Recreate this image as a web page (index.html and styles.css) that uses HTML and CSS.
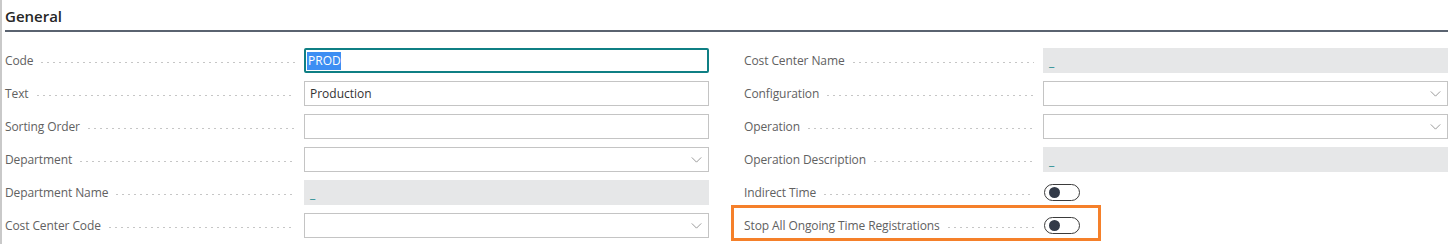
FILE: index.html
```html
<!DOCTYPE html>
<html>
<head>
<meta charset="utf-8">
<link rel="stylesheet" href="styles.css">
</head>
<body>
<div class="page">
  <div class="section">
    <h2 class="section-title">General</h2>
    <div class="grid">
      <div class="col">
        <div class="row"><span class="label">Code</span><span class="lead"></span><div class="field focus"><span class="sel">PROD</span></div></div>
        <div class="row"><span class="label">Text</span><span class="lead"></span><div class="field">Production</div></div>
        <div class="row"><span class="label">Sorting Order</span><span class="lead"></span><div class="field"></div></div>
        <div class="row"><span class="label">Department</span><span class="lead"></span><div class="field select"><svg class="chev" viewBox="0 0 12 7"><path d="M0.5 0.5 L6 6 L11.5 0.5" /></svg></div></div>
        <div class="row"><span class="label">Department Name</span><span class="lead"></span><div class="field ro"><span class="us">_</span></div></div>
        <div class="row"><span class="label">Cost Center Code</span><span class="lead"></span><div class="field select"><svg class="chev" viewBox="0 0 12 7"><path d="M0.5 0.5 L6 6 L11.5 0.5" /></svg></div></div>
      </div>
      <div class="col">
        <div class="row"><span class="label">Cost Center Name</span><span class="lead"></span><div class="field ro"><span class="us">_</span></div></div>
        <div class="row"><span class="label">Configuration</span><span class="lead"></span><div class="field select"><svg class="chev" viewBox="0 0 12 7"><path d="M0.5 0.5 L6 6 L11.5 0.5" /></svg></div></div>
        <div class="row"><span class="label">Operation</span><span class="lead"></span><div class="field select"><svg class="chev" viewBox="0 0 12 7"><path d="M0.5 0.5 L6 6 L11.5 0.5" /></svg></div></div>
        <div class="row"><span class="label">Operation Description</span><span class="lead"></span><div class="field ro"><span class="us">_</span></div></div>
        <div class="row"><span class="label">Indirect Time</span><span class="lead"></span><div class="field plain"><span class="toggle"><span class="knob"></span></span></div></div>
        <div class="row hl"><span class="label">Stop All Ongoing Time Registrations</span><span class="lead"></span><div class="field plain"><span class="toggle"><span class="knob"></span></span></div><span class="highlight"></span></div>
      </div>
    </div>
  </div>
</div>
</body>
</html>
```
FILE: styles.css
```css
html, body {
  margin: 0;
  padding: 0;
  background: #ffffff;
}
body {
  font-family: "Open Sans", "Noto Sans", "Liberation Sans", sans-serif;
  color: #212121;
}
.page {
  border-left: 2px solid #c9c9c9;
  height: 244px;
  box-sizing: border-box;
  padding: 0 6px 0 3px;
}
.section-title {
  margin: 0;
  padding: 7px 0 4px 0;
  font-size: 15px;
  font-weight: 600;
  line-height: 19px;
  color: #262626;
  border-bottom: 2px solid #5a6370;
}
.grid {
  display: grid;
  grid-template-columns: 704px 704px;
  column-gap: 35px;
  padding-top: 16px;
}
.col {
  display: flex;
  flex-direction: column;
  row-gap: 8px;
}
.row {
  display: flex;
  align-items: center;
  height: 25px;
  position: relative;
}
.label {
  font-size: 12px;
  letter-spacing: -0.1px;
  color: #616161;
  white-space: nowrap;
  padding-right: 6px;
}
.lead {
  flex: 1;
  height: 3px;
  margin: 4px 9px 0 0;
  align-self: center;
  background-image: radial-gradient(circle, #c6c6c6 0.75px, transparent 1.05px);
  background-size: 6px 3px;
  background-repeat: repeat-x;
  background-position: left center;
}
.field {
  width: 405px;
  height: 25px;
  box-sizing: border-box;
  border: 1px solid #c4c4c4;
  background: #fff;
  font-size: 12px;
  color: #333;
  padding: 0 5px;
  display: flex;
  align-items: center;
  position: relative;
}
.field.focus {
  border: 2px solid #0f7f84;
  border-radius: 2px;
  padding: 0 1px;
}
.sel {
  background: #3d8ef3;
  color: #fff;
  padding: 1px 0 1px 1px;
  line-height: 16px;
}
.field.select {
  justify-content: flex-end;
  padding-right: 6px;
}
.chev {
  width: 11px;
  height: 6px;
  fill: none;
  stroke: #8a8a8a;
  stroke-width: 1;
}
.field.ro {
  background: #e6e7e8;
  border-color: #e6e7e8;
  align-items: flex-end;
}
.us {
  color: #1b8a8f;
  font-size: 12px;
  line-height: 14px;
  padding-bottom: 3px;
}
.field.plain {
  border: none;
  background: transparent;
  padding: 0 1px;
}
.toggle {
  width: 36px;
  height: 17px;
  box-sizing: border-box;
  border: 1px solid #3b3b3b;
  border-radius: 9px;
  display: flex;
  align-items: center;
  padding-left: 4px;
}
.knob {
  width: 11px;
  height: 11px;
  border-radius: 50%;
  background: #323a48;
}
.highlight {
  position: absolute;
  left: -13px;
  top: -8px;
  width: 370px;
  height: 36px;
  box-sizing: border-box;
  border: 3px solid #f5802a;
  pointer-events: none;
}
```
